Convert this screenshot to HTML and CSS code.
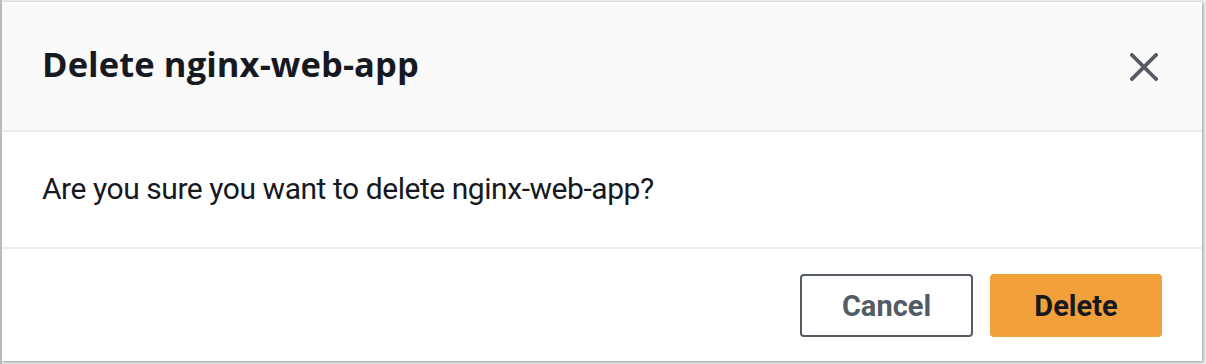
FILE: index.html
```html
<!DOCTYPE html>
<html lang="en">
<head>
<meta charset="utf-8">
<title>Delete nginx-web-app</title>
<link rel="stylesheet" href="styles.css">
</head>
<body>
<div class="modal" role="dialog" aria-labelledby="modal-title">
  <div class="modal-header">
    <h2 id="modal-title" class="modal-title">Delete nginx-web-app</h2>
    <button class="close-btn" aria-label="Close">
      <svg width="28" height="28" viewBox="0 0 28 28" aria-hidden="true">
        <path d="M2 2 L26 26 M26 2 L2 26" stroke="#545b64" stroke-width="3.8" stroke-linecap="square" fill="none"/>
      </svg>
    </button>
  </div>
  <div class="modal-body">
    <p class="modal-text">Are you sure you want to delete nginx-web-app?</p>
  </div>
  <div class="modal-footer">
    <button class="btn btn-normal">Cancel</button>
    <button class="btn btn-primary">Delete</button>
  </div>
</div>
</body>
</html>
```

FILE: styles.css
```css
html {
  background: #eaeded;
}
body {
  margin: 0;
  padding: 2px 4px 3px 0;
  border-left: 2px solid #b4bcbf;
  height: 364px;
  box-sizing: border-box;
  font-family: Roboto, "Open Sans", "Liberation Sans", sans-serif;
  color: #16191f;
}
.modal {
  height: 359px;
  background: #ffffff;
  display: flex;
  flex-direction: column;
  box-shadow: 1px 1px 3px rgba(0, 0, 0, 0.35);
}
.modal-header {
  height: 128px;
  background: #fafafa;
  border-bottom: 2px solid #eaeded;
  display: flex;
  align-items: center;
  justify-content: space-between;
  padding: 0 44px 0 40px;
}
.modal-title {
  margin: 0 0 4px 0;
  font-family: "Open Sans", Roboto, sans-serif;
  font-weight: 700;
  font-size: 34.5px;
  line-height: 40px;
  color: #16191f;
  letter-spacing: 0.1px;
}
.close-btn {
  border: 0;
  background: transparent;
  padding: 0;
  width: 28px;
  height: 28px;
  display: flex;
  margin-top: 2px;
}
.modal-body {
  height: 115px;
  border-bottom: 2px solid #eaeded;
  display: flex;
  align-items: center;
  padding: 0 40px;
}
.modal-text {
  margin: 0;
  font-size: 30px;
  line-height: 36px;
  letter-spacing: -0.45px;
  color: #16191f;
  padding-bottom: 2px;
}
.modal-footer {
  flex: 1;
  display: flex;
  justify-content: flex-end;
  align-items: flex-start;
  gap: 17px;
  padding: 25px 40px 0 40px;
}
.btn {
  height: 63px;
  border-radius: 4px;
  font-family: Roboto, "Open Sans", sans-serif;
  font-weight: 700;
  font-size: 29px;
  cursor: pointer;
  box-sizing: border-box;
}
.btn-normal {
  width: 173px;
  background: #ffffff;
  border: 2px solid #545b64;
  color: #545b64;
}
.btn-primary {
  width: 172px;
  background: #f2a03a;
  border: 2px solid #f2a03a;
  color: #16191f;
}
```
